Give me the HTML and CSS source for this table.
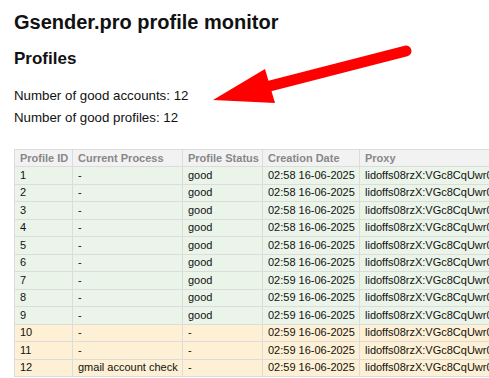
FILE: index.html
```html
<!DOCTYPE html>
<html>
<head>
<meta charset="utf-8">
<title>Gsender.pro profile monitor</title>
<link rel="stylesheet" href="styles.css">
</head>
<body>
<div class="page">
  <h1 class="title">Gsender.pro profile monitor</h1>
  <h2 class="section">Profiles</h2>
  <div class="stats">
    <p>Number of good accounts: 12</p>
    <p>Number of good profiles: 12</p>
  </div>
  <table class="profiles">
    <colgroup>
      <col class="c-id"><col class="c-proc"><col class="c-status"><col class="c-date"><col class="c-proxy">
    </colgroup>
    <thead>
      <tr><th>Profile ID</th><th>Current Process</th><th>Profile Status</th><th>Creation Date</th><th>Proxy</th></tr>
    </thead>
    <tbody>
      <tr class="ok"><td>1</td><td>-</td><td>good</td><td>02:58 16-06-2025</td><td>lidoffs08rzX:VGc8CqUwr0pQ@45.139.125.88:8000</td></tr>
      <tr class="ok"><td>2</td><td>-</td><td>good</td><td>02:58 16-06-2025</td><td>lidoffs08rzX:VGc8CqUwr0pQ@45.139.125.88:8000</td></tr>
      <tr class="ok"><td>3</td><td>-</td><td>good</td><td>02:58 16-06-2025</td><td>lidoffs08rzX:VGc8CqUwr0pQ@45.139.125.88:8000</td></tr>
      <tr class="ok"><td>4</td><td>-</td><td>good</td><td>02:58 16-06-2025</td><td>lidoffs08rzX:VGc8CqUwr0pQ@45.139.125.88:8000</td></tr>
      <tr class="ok"><td>5</td><td>-</td><td>good</td><td>02:58 16-06-2025</td><td>lidoffs08rzX:VGc8CqUwr0pQ@45.139.125.88:8000</td></tr>
      <tr class="ok"><td>6</td><td>-</td><td>good</td><td>02:58 16-06-2025</td><td>lidoffs08rzX:VGc8CqUwr0pQ@45.139.125.88:8000</td></tr>
      <tr class="ok"><td>7</td><td>-</td><td>good</td><td>02:59 16-06-2025</td><td>lidoffs08rzX:VGc8CqUwr0pQ@45.139.125.88:8000</td></tr>
      <tr class="ok"><td>8</td><td>-</td><td>good</td><td>02:59 16-06-2025</td><td>lidoffs08rzX:VGc8CqUwr0pQ@45.139.125.88:8000</td></tr>
      <tr class="ok"><td>9</td><td>-</td><td>good</td><td>02:59 16-06-2025</td><td>lidoffs08rzX:VGc8CqUwr0pQ@45.139.125.88:8000</td></tr>
      <tr class="pending"><td>10</td><td>-</td><td>-</td><td>02:59 16-06-2025</td><td>lidoffs08rzX:VGc8CqUwr0pQ@45.139.125.88:8000</td></tr>
      <tr class="pending"><td>11</td><td>-</td><td>-</td><td>02:59 16-06-2025</td><td>lidoffs08rzX:VGc8CqUwr0pQ@45.139.125.88:8000</td></tr>
      <tr class="pending"><td>12</td><td>gmail account check</td><td>-</td><td>02:59 16-06-2025</td><td>lidoffs08rzX:VGc8CqUwr0pQ@45.139.125.88:8000</td></tr>
    </tbody>
  </table>
</div>
<svg class="annotation" width="489" height="378" viewBox="0 0 489 378" xmlns="http://www.w3.org/2000/svg">
  <line x1="406" y1="51" x2="262" y2="88" stroke="#ff0000" stroke-width="11" stroke-linecap="round"/>
  <polygon points="213,100 265,69 275,103" fill="#ff0000"/>
</svg>
</body>
</html>
```
FILE: styles.css
```css
html, body {
  margin: 0;
  padding: 0;
  overflow: hidden;
  background: #ffffff;
}
body {
  font-family: "Liberation Sans", Arial, sans-serif;
  color: #111;
  width: 489px;
  height: 378px;
  position: relative;
}
.page {
  padding: 11px 0 0 14px;
}
.title {
  margin: 0;
  font-size: 20px;
  line-height: 23px;
  font-weight: bold;
}
.section {
  margin: 15px 0 0;
  font-size: 17px;
  line-height: 20px;
  font-weight: bold;
}
.stats {
  margin-top: 16px;
}
.stats p {
  margin: 0;
  font-size: 13.3px;
  line-height: 22px;
}
.profiles {
  margin-top: 20px;
  border-collapse: collapse;
  table-layout: fixed;
  width: 700px;
  font-size: 11px;
  white-space: nowrap;
}
.c-id { width: 58px; }
.c-proc { width: 110px; }
.c-status { width: 80px; }
.c-date { width: 97px; }
.c-proxy { width: 355px; }
.profiles th,
.profiles td {
  border: 1px solid #dcdcdc;
  padding: 1.5px 5px 2.5px;
  line-height: 12.5px;
  text-align: left;
  overflow: hidden;
}
.profiles th {
  background: #f2f2f2;
  color: #888;
  font-weight: bold;
  padding: 1.5px 5px 2px;
}
.profiles td {
  color: #111;
}
.ok td {
  background: #eaf4e9;
}
.pending td {
  background: #fdf0d4;
}
.annotation {
  position: absolute;
  left: 0;
  top: 0;
  pointer-events: none;
}
```
